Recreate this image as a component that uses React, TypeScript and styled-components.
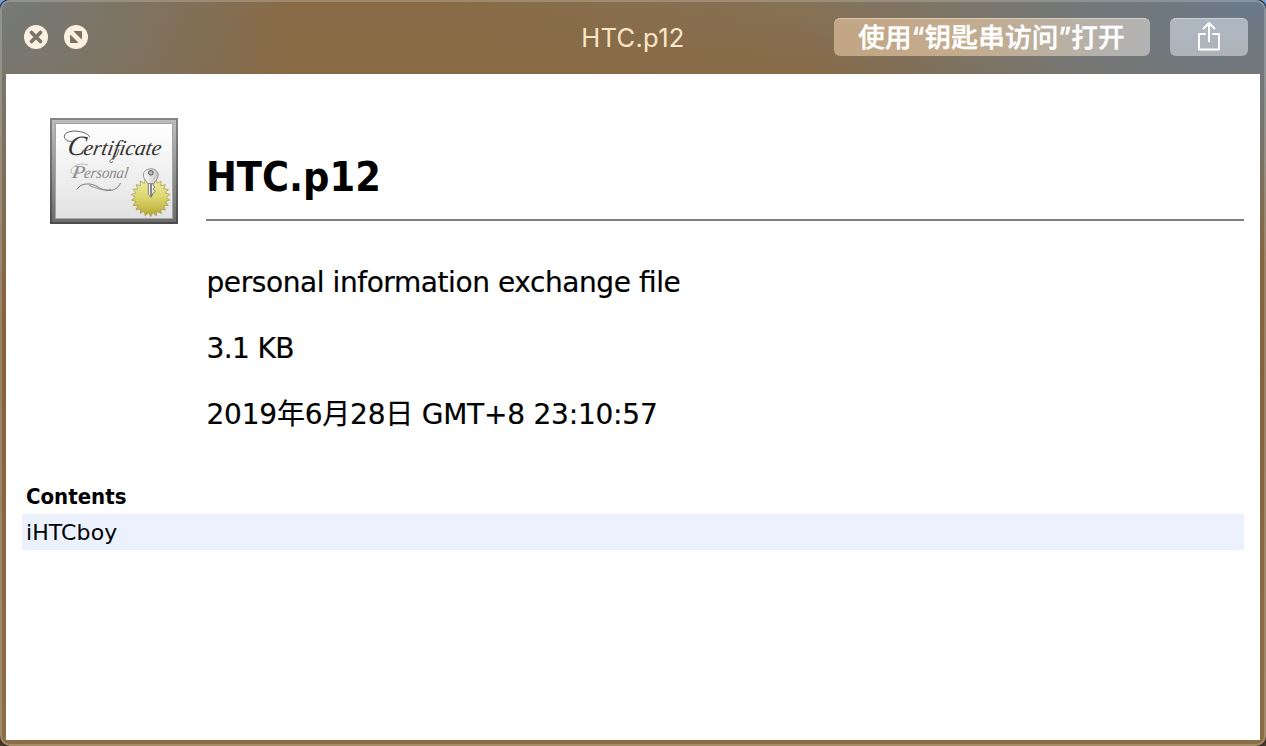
import React from 'react';
import styled, { createGlobalStyle } from 'styled-components';

const GlobalStyle = createGlobalStyle`
  *, *::before, *::after { box-sizing: border-box; }
  html, body { margin: 0; padding: 0; }
  body {
    width: 1266px;
    height: 746px;
    overflow: hidden;
    background: linear-gradient(#6f9fd8 0, #4d6a8c 40px, #3a2f22 500px, #4a3a26 100%);
  }
`;

const Window = styled.div`
  width: 1266px;
  height: 746px;
  display: flex;
  flex-direction: column;
  padding: 2px 6px 6px;
  border-radius: 10px;
  background:
    radial-gradient(ellipse 290px 300px at 0 0, rgba(116, 123, 124, 0.95), rgba(116, 123, 124, 0.52) 45%, rgba(116, 123, 124, 0)),
    radial-gradient(ellipse 440px 260px at 1240px 0, rgba(108, 122, 138, 1), rgba(112, 122, 128, 0.76) 45%, rgba(112, 122, 128, 0)),
    radial-gradient(ellipse 420px 90px at 860px 0, rgba(130, 125, 110, 0.4), rgba(130, 125, 110, 0)),
    linear-gradient(#886b46, #84633e 50%, #8c6e45);
  box-shadow: inset 0 0 0 2px rgba(255, 255, 255, 0.2), 0 0 0 1px #2c2a28;
`;

const TitleBar = styled.header`
  flex: none;
  height: 72px;
  display: grid;
  grid-template-columns: 1fr auto 1fr;
  align-items: center;
  padding: 0 12px 2px 16px;
`;

const Controls = styled.div`
  display: flex;
  gap: 12px;
`;

const RoundButton = styled.button`
  width: 28px;
  height: 28px;
  padding: 0;
  border: 0;
  background: none;
  svg { display: block; }
`;

const WindowTitle = styled.h1`
  margin: 2px 4px 0 0;
  font: 400 25.5px/32px Inter, sans-serif;
  letter-spacing: 0.3px;
  color: #ffe6c8;
`;

const Actions = styled.div`
  display: flex;
  justify-content: flex-end;
  gap: 20px;
`;

const ActionButton = styled.button<{ $width: number; $tint: string }>`
  width: ${(p) => p.$width}px;
  height: 38px;
  display: flex;
  align-items: center;
  justify-content: center;
  padding: 0;
  border: 0;
  border-radius: 6px;
  background: ${(p) => p.$tint};
  box-shadow: inset 0 1px 0 rgba(255, 240, 220, 0.45);
  color: #fff;
  font: 500 26.6px/38px Inter, "Noto Sans CJK SC", sans-serif;
  letter-spacing: 0.2px;
  white-space: nowrap;
`;

const ButtonLabel = styled.span`
  margin-right: 1px;
  -webkit-text-stroke: 0.4px #fff;
`;

const Sheet = styled.main`
  flex: 1;
  min-height: 0;
  padding: 44px 16px 0;
  background: #fff;
  color: #000;
  font-family: "DejaVu Sans", "Noto Sans CJK SC", sans-serif;
`;

const Summary = styled.section`
  display: flex;
  gap: 28px;
  padding-left: 28px;
`;

const CertificateIcon = styled.svg`
  flex: none;
  width: 128px;
  height: 106px;
  font-family: "Liberation Serif", serif;
  font-style: italic;
`;

const Details = styled.div`
  flex: 1;
`;

const FileName = styled.h2`
  margin: 0;
  height: 103px;
  padding-top: 35px;
  border-bottom: 2px solid #808080;
  font: 700 41px/48px "DejaVu Sans Condensed", "DejaVu Sans", sans-serif;
  font-stretch: 90%;
`;

const Facts = styled.div`
  display: flex;
  flex-direction: column;
  gap: 32px;
  padding: 45px 0 0 0.5px;
`;

const Fact = styled.div<{ $tracking: number }>`
  font-size: 28px;
  line-height: 34px;
  letter-spacing: ${(p) => p.$tracking}px;
  font-feature-settings: "liga" 1;
  -webkit-text-stroke: 0.2px #000;
  white-space: nowrap;
`;

const Contents = styled.section`
  margin-top: 46px;
`;

const ContentsHeading = styled.h3`
  margin: 0;
  height: 36px;
  padding: 1px 0 0 4px;
  font: 700 22px/36px "DejaVu Sans Condensed", "DejaVu Sans", sans-serif;
  font-stretch: 90%;
`;

const ContentsRow = styled.div`
  height: 36px;
  padding: 1px 0 0 4px;
  background: #ebf2fe;
  font-size: 22px;
  line-height: 36px;
  letter-spacing: 0.1px;
`;

const sealPoints = Array.from({ length: 44 }, (_, i) => {
  const r = i % 2 === 0 ? 19.4 : 15.4;
  const a = (i / 44) * Math.PI * 2 - Math.PI / 2;
  return `${(100.7 + r * Math.cos(a)).toFixed(2)},${(79.3 + r * Math.sin(a)).toFixed(2)}`;
}).join(' ');

function Certificate() {
  return (
    <CertificateIcon viewBox="0 0 128 106">
      <defs>
        <linearGradient id="frame" x1="0" y1="0" x2="0" y2="1">
          <stop offset="0" stopColor="#bcbcbc" />
          <stop offset="1" stopColor="#6c6c6c" />
        </linearGradient>
        <linearGradient id="edge" x1="0" y1="0" x2="0" y2="1">
          <stop offset="0" stopColor="#848484" />
          <stop offset="1" stopColor="#4c4c4c" />
        </linearGradient>
        <linearGradient id="paper" x1="0" y1="0" x2="0" y2="1">
          <stop offset="0" stopColor="#fff" />
          <stop offset="1" stopColor="#e2e2e2" />
        </linearGradient>
        <linearGradient id="seal" x1="0" y1="0" x2="0" y2="1">
          <stop offset="0" stopColor="#f0eca4" />
          <stop offset="0.5" stopColor="#dcd670" />
          <stop offset="1" stopColor="#b5a52b" />
        </linearGradient>
        <linearGradient id="metal" x1="0" y1="0" x2="1" y2="0">
          <stop offset="0" stopColor="#fdfdfd" />
          <stop offset="1" stopColor="#c4c4c8" />
        </linearGradient>
      </defs>
      <rect width="128" height="106" fill="url(#edge)" />
      <rect x="2" y="2" width="124" height="102" fill="url(#frame)" />
      <rect x="5.5" y="5.5" width="117" height="95" fill="url(#paper)" stroke="#a4a4a4" />
      <text y="37.5" fill="#333" transform="skewX(-10)">
        <tspan x="23" fontSize="28" textLength="18" lengthAdjust="spacingAndGlyphs">C</tspan>
        <tspan x="39" fontSize="21.5" textLength="78" lengthAdjust="spacingAndGlyphs">ertificate</tspan>
      </text>
      <path d="M40 19 C36 12 17 11 14.5 17 C13 22 20 26 27 21.5" fill="none" stroke="#555" strokeWidth="0.9" />
      <path d="M63 43.5 C60 46.5 58 43 62 41 C66 39 68 36 69 31" fill="none" stroke="#555" strokeWidth="0.9" />
      <text y="60.5" fill="#888" transform="skewX(-8)">
        <tspan x="30" fontSize="18" textLength="13" lengthAdjust="spacingAndGlyphs">P</tspan>
        <tspan x="42" fontSize="16" textLength="44" lengthAdjust="spacingAndGlyphs">ersonal</tspan>
      </text>
      <path d="M38 47 C29 44 20 49 21 54 C22 58 28 55 29 52" fill="none" stroke="#aaa" strokeWidth="0.8" />
      <path d="M27 71.5 C31 64 42 65 48 69 C55 73.5 66 75 70.5 65" fill="none" stroke="#777" strokeWidth="1" />
      <path d="M39 67.5 C47 70 53 73.5 61 71.5" fill="none" stroke="#888" strokeWidth="0.9" />
      <polygon points={sealPoints} fill="url(#seal)" stroke="#a19a4a" strokeWidth="0.7" strokeLinejoin="round" />
      <path d="M98.3 62 H103 V67 L105 69 L103 71 L105 73.5 L103 75.5 L101 79.5 L98.3 76.5 Z" fill="#eee" stroke="#666" strokeWidth="0.8" />
      <path d="M101 64 V78" stroke="#333" strokeWidth="1.1" />
      <path d="M93.3 57 A7.5 6.3 0 0 1 108.3 57 C108.3 61 105 62.5 104 65.5 H97.5 C96.5 62.5 93.3 61 93.3 57 Z" fill="url(#metal)" stroke="#8a8a8e" strokeWidth="0.9" />
      <circle cx="100.8" cy="54.8" r="2.3" fill="#bbb" stroke="#555" strokeWidth="1" />
    </CertificateIcon>
  );
}

export default function App() {
  return (
    <>
      <GlobalStyle />
      <Window>
        <TitleBar>
          <Controls>
            <RoundButton aria-label="Close">
              <svg width="28" height="28" viewBox="0 0 28 28">
                <circle cx="14" cy="14" r="12" fill="#fcf0e2" />
                <path d="M9.5 9.5 L18.5 18.5 M18.5 9.5 L9.5 18.5" stroke="#7b7468" strokeWidth="3.8" strokeLinecap="round" />
              </svg>
            </RoundButton>
            <RoundButton aria-label="Full screen">
              <svg width="28" height="28" viewBox="0 0 28 28">
                <circle cx="14" cy="14" r="12" fill="#fcf0e2" />
                <path d="M12.2 8.5 H19.5 V15.8 Z M8.5 12.2 L15.8 19.5 H8.5 Z" fill="#7d705f" stroke="#7d705f" strokeWidth="1" strokeLinejoin="round" />
              </svg>
            </RoundButton>
          </Controls>
          <WindowTitle>HTC.p12</WindowTitle>
          <Actions>
            <ActionButton $width={316} $tint="linear-gradient(90deg, #c2a685, #c3ab8c 40%, #b6b1a8 80%, #b2b3b3)">
              <ButtonLabel>使用“钥匙串访问”打开</ButtonLabel>
            </ActionButton>
            <ActionButton $width={78} $tint="linear-gradient(#adb7c3, #afb3b8)" aria-label="Share">
              <svg width="26" height="32" viewBox="0 0 26 32" fill="none" stroke="#fff" strokeWidth="1.9" strokeLinecap="round" strokeLinejoin="round">
                <path d="M9 13 H3 V28.5 H23 V13 H17 M13 20.5 V2 M7.5 7.5 L13 2 L18.5 7.5" />
              </svg>
            </ActionButton>
          </Actions>
        </TitleBar>
        <Sheet>
          <Summary>
            <Certificate />
            <Details>
              <FileName>HTC.p12</FileName>
              <Facts>
                <Fact $tracking={-0.42}>personal information exchange file</Fact>
                <Fact $tracking={-0.6}>3.1 KB</Fact>
                <Fact $tracking={-0.22}>2019年6月28日 GMT+8 23:10:57</Fact>
              </Facts>
            </Details>
          </Summary>
          <Contents>
            <ContentsHeading>Contents</ContentsHeading>
            <ContentsRow>iHTCboy</ContentsRow>
          </Contents>
        </Sheet>
      </Window>
    </>
  );
}
